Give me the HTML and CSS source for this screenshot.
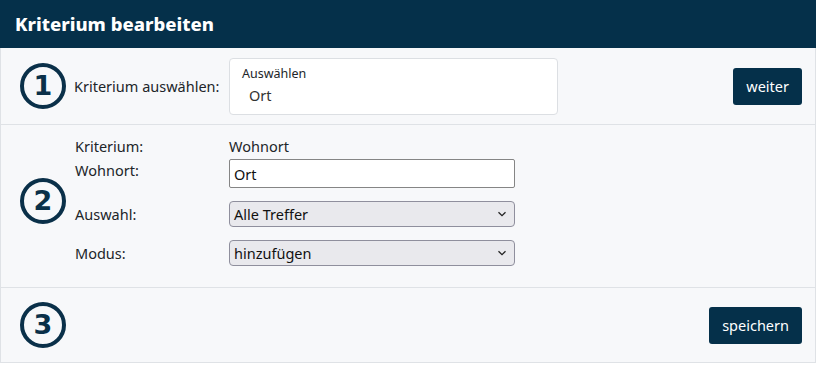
FILE: index.html
```html
<!DOCTYPE html>
<html lang="de">
<head>
    <meta charset="UTF-8">
    <meta name="viewport" content="width=device-width, initial-scale=1.0">
    <title>Kriterium bearbeiten</title>
    <link rel="stylesheet" href="styles.css">
</head>
<body>
    <div class="panel">
        <header>Kriterium bearbeiten</header>

        <section class="step step-one">
            <div class="step-num">1</div>
            <label class="step-label">Kriterium auswählen:</label>
            <div class="picker">
                <span class="picker-hint">Auswählen</span>
                <span class="picker-value">Ort</span>
            </div>
            <button class="btn">weiter</button>
        </section>

        <section class="step step-two">
            <div class="step-num">2</div>
            <div class="fields">
                <div class="field field-text">
                    <span class="field-label">Kriterium:</span>
                    <span class="field-value">Wohnort</span>
                </div>
                <div class="field field-input">
                    <label class="field-label">Wohnort:</label>
                    <input type="text" class="text-input" value="Ort">
                </div>
                <div class="field field-select">
                    <label class="field-label">Auswahl:</label>
                    <div class="select">Alle Treffer
                        <svg width="10" height="6" viewBox="0 0 10 6"><path d="M1.5 1.2 L5 4.6 L8.5 1.2" fill="none" stroke="#222" stroke-width="1.3"/></svg>
                    </div>
                </div>
                <div class="field field-select">
                    <label class="field-label">Modus:</label>
                    <div class="select">hinzufügen
                        <svg width="10" height="6" viewBox="0 0 10 6"><path d="M1.5 1.2 L5 4.6 L8.5 1.2" fill="none" stroke="#222" stroke-width="1.3"/></svg>
                    </div>
                </div>
            </div>
        </section>

        <section class="step step-three">
            <div class="step-num">3</div>
            <button class="btn">speichern</button>
        </section>
    </div>
</body>
</html>
```

FILE: styles.css
```css
body {
    font-family: "Noto Sans", "Open Sans", Arial, sans-serif;
    margin: 0;
    padding: 0;
    background: #ffffff;
    color: #212529;
}
.panel {
    width: 816px;
}
header {
    background: #05304a;
    color: #ffffff;
    font-size: 18.5px;
    font-weight: 800;
    height: 48px;
    line-height: 48px;
    padding-left: 15px;
}
.step {
    display: flex;
    align-items: center;
    background: #f7f8fa;
    border: 1px solid #dfe2e6;
    border-top: none;
    padding-left: 19px;
    padding-right: 13px;
}
.step-num {
    width: 38px;
    height: 38px;
    border: 4px solid #0a3049;
    border-radius: 50%;
    color: #0a3049;
    font-family: "DejaVu Sans", sans-serif;
    font-size: 27px;
    font-weight: 700;
    line-height: 38px;
    text-align: center;
    flex-shrink: 0;
}
.step-one {
    height: 76px;
}
.step-label {
    font-size: 14.5px;
    margin-left: 8px;
    width: 155px;
}
.picker {
    display: flex;
    flex-direction: column;
    width: 303px;
    height: 43px;
    padding: 6px 12px;
    background: #ffffff;
    border: 1px solid #dcdfe3;
    border-radius: 4px;
    margin-top: 1px;
}
.picker-hint {
    font-size: 12.5px;
    line-height: 18px;
}
.picker-value {
    font-size: 14.5px;
    line-height: 24px;
    padding-left: 7px;
    color: #333;
}
.btn {
    margin-left: auto;
    background: #05304a;
    color: #ffffff;
    border: none;
    border-radius: 3px;
    font-family: inherit;
    font-size: 14.5px;
    height: 37px;
    padding: 0 13px;
}
.step-two {
    padding-top: 11px;
    padding-bottom: 21px;
}
.fields {
    display: flex;
    flex-direction: column;
    margin-left: 9px;
}
.field {
    display: flex;
    align-items: center;
}
.field-label {
    width: 154px;
    font-size: 14.5px;
}
.field-text {
    height: 20px;
    font-size: 14.5px;
}
.field-input {
    margin-top: 3px;
    align-items: flex-start;
}
.field-input .field-label {
    padding-top: 1px;
}
.text-input {
    box-sizing: border-box;
    width: 286px;
    height: 29px;
    border: 1px solid #858585;
    border-radius: 2px;
    padding: 0 4px;
    font-family: inherit;
    font-size: 14.5px;
    color: #111;
    margin: 0;
}
.field-select {
    margin-top: 13px;
}
.select {
    display: flex;
    align-items: center;
    justify-content: space-between;
    box-sizing: border-box;
    width: 286px;
    height: 26px;
    padding: 0 7px 0 4px;
    background: #e9e9ed;
    border: 1px solid #8f8f9d;
    border-radius: 4px;
    font-size: 14.5px;
    color: #111;
}
.step-three {
    height: 74px;
}
```
